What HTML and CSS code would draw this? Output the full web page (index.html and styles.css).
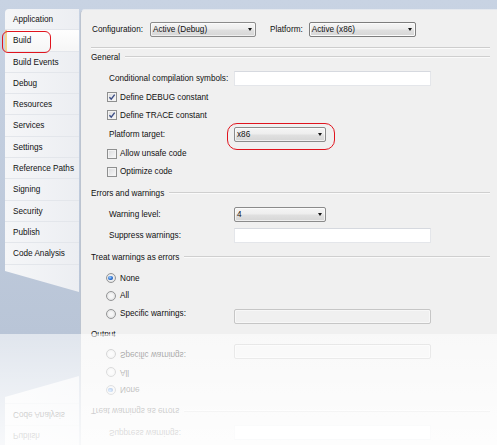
FILE: index.html
```html
<!DOCTYPE html>
<html>
<head>
<meta charset="utf-8">
<title>Build</title>
<link rel="stylesheet" href="styles.css">
</head>
<body>
<div class="window">
  <nav class="tabs">
    <div class="tab">Application</div>
    <div class="tab selected">Build</div>
    <div class="tab">Build Events</div>
    <div class="tab">Debug</div>
    <div class="tab">Resources</div>
    <div class="tab">Services</div>
    <div class="tab">Settings</div>
    <div class="tab">Reference Paths</div>
    <div class="tab">Signing</div>
    <div class="tab">Security</div>
    <div class="tab">Publish</div>
    <div class="tab">Code Analysis</div>
  </nav>
  <main class="panel">
    <div class="row config">
      <span class="lbl-config">Configuration:</span>
      <div class="combo combo-config"><span class="val">Active (Debug)</span><i class="arrow"></i></div>
      <span class="lbl-plat">Platform:</span>
      <div class="combo combo-plat"><span class="val">Active (x86)</span><i class="arrow"></i></div>
    </div>
    <div class="sep"></div>

    <div class="group g-general">General</div>
    <div class="row ind field-row r-cond">
      <span class="field-lbl">Conditional compilation symbols:</span>
      <div class="textbox"></div>
    </div>
    <div class="row chk-row r-debug">
      <span class="chk"><svg viewBox="0 0 8 8" width="8" height="8"><path d="M1.4 4.2 L3.2 6.1 L6.7 1.6" fill="none" stroke="#3d4f86" stroke-width="1.4"/></svg></span>
      <span>Define DEBUG constant</span>
    </div>
    <div class="row chk-row r-trace">
      <span class="chk"><svg viewBox="0 0 8 8" width="8" height="8"><path d="M1.4 4.2 L3.2 6.1 L6.7 1.6" fill="none" stroke="#3d4f86" stroke-width="1.4"/></svg></span>
      <span>Define TRACE constant</span>
    </div>
    <div class="row ind field-row r-target">
      <span class="field-lbl">Platform target:</span>
      <div class="combo combo-field"><span class="val">x86</span><i class="arrow"></i></div>
    </div>
    <div class="row chk-row r-unsafe">
      <span class="chk"></span>
      <span>Allow unsafe code</span>
    </div>
    <div class="row chk-row r-opt">
      <span class="chk"></span>
      <span>Optimize code</span>
    </div>

    <div class="group g-errors">Errors and warnings</div>
    <div class="row ind field-row r-level">
      <span class="field-lbl">Warning level:</span>
      <div class="combo combo-field"><span class="val">4</span><i class="arrow"></i></div>
    </div>
    <div class="row ind field-row r-suppress">
      <span class="field-lbl">Suppress warnings:</span>
      <div class="textbox"></div>
    </div>

    <div class="group g-treat">Treat warnings as errors</div>
    <div class="row radio-row r-none">
      <span class="radio checked"></span>
      <span>None</span>
    </div>
    <div class="row radio-row r-all">
      <span class="radio"></span>
      <span>All</span>
    </div>
    <div class="row radio-row r-specific">
      <span class="radio"></span>
      <span class="specific-lbl">Specific warnings:</span>
      <div class="textbox disabled"></div>
    </div>

    <div class="group g-output">Output</div>
  </main>
  <div class="mark mark-build"></div>
  <div class="mark mark-target"></div>
</div>
<div class="reflection" aria-hidden="true"></div>
<script src="script.js"></script>
</body>
</html>
```

FILE: script.js
```js
// Build the mirrored reflection under the window from a copy of it.
(function () {
  var win = document.querySelector('.window');
  var refl = document.querySelector('.reflection');
  if (win && refl) {
    var copy = win.cloneNode(true);
    copy.classList.add('mirrored');
    refl.appendChild(copy);
  }
})();
```

FILE: styles.css
```css
html, body {
  margin: 0;
  background: #ffffff;
}

body {
  font-family: "Liberation Sans", Arial, sans-serif;
  font-size: 8.2px;
  color: #111111;
  overflow: hidden;
}

.window {
  position: relative;
  box-sizing: border-box;
  height: 334px;
  padding-top: 9px;
  display: flex;
  align-items: flex-start;
  overflow: hidden;
  background: linear-gradient(#c8d3e3, #b9c5d7);
}

/* reflection below the window */
.reflection {
  position: relative;
  height: 111px;
  overflow: hidden;
}

.window.mirrored {
  transform: scaleY(-1);
}

.reflection::after {
  content: "";
  position: absolute;
  inset: 0;
  background: linear-gradient(rgba(255,255,255,0.56), rgba(255,255,255,0.88));
}

/* left tab column */
.tabs {
  flex: none;
  margin-left: 5px;
  width: 74px;
  height: 283px;
  box-sizing: border-box;
  background: linear-gradient(to right, #f5f6f8, #eceef2);
  border-top-left-radius: 4px;
  clip-path: polygon(0 0, 100% 0, 100% 100%, 0 calc(100% - 21px));
}

.tab {
  box-sizing: border-box;
  height: 21.3px;
  line-height: 21.3px;
  padding-left: 8px;
  border-bottom: 1px solid #e3e6eb;
  white-space: nowrap;
}

.tab.selected {
  background: linear-gradient(#fefefe, #f6f6f6);
  border-left: 2px solid #f2d690;
  padding-left: 6px;
}

/* content panel */
.panel {
  flex: 1;
  align-self: stretch;
  margin-left: 1px;
  padding: 0 7px 0 10px;
  display: flex;
  flex-direction: column;
  background: #f0f0f0;
  border-left: 1px solid #bcc4d0;
  border-top: 1px solid #e4e8ee;
  border-top-left-radius: 5px;
}

.row {
  flex: none;
  display: flex;
  align-items: center;
  white-space: nowrap;
}

.config { margin-top: 12px; height: 15px; padding-left: 1px; }
.lbl-config { margin-right: 7px; }
.lbl-plat { margin-left: 14px; margin-right: 6px; }

.sep {
  flex: none;
  margin-top: 10px;
  height: 0;
  border-top: 1px solid #cdcdcd;
  border-bottom: 1px solid #fbfbfb;
}

.group {
  flex: none;
  height: 12px;
  display: flex;
  align-items: center;
  white-space: nowrap;
}

.group::after {
  content: "";
  flex: 1;
  margin-left: 5px;
  height: 0;
  border-top: 1px solid #cfcfcf;
  border-bottom: 1px solid #fafafa;
}

.g-general { margin-top: 2px; }
.g-errors { margin-top: 6.5px; }
.g-treat { margin-top: 8.5px; }
.g-output { margin-top: 5px; }

.ind { padding-left: 18px; }
.field-row { height: 15px; }
.field-lbl { width: 125px; flex: none; }

.r-cond { margin-top: 8px; }
.r-debug { margin-top: 2.3px; }
.r-trace { margin-top: 0.2px; }
.r-target { margin-top: 2.5px; }
.r-unsafe { margin-top: 2.7px; }
.r-opt { margin-top: 0; }
.r-level { margin-top: 7.8px; }
.r-suppress { margin-top: 6px; }
.r-none { margin-top: 5.8px; }
.r-all { margin-top: 0; }
.r-specific { margin-top: 0.1px; }

/* combo boxes */
.combo {
  flex: none;
  box-sizing: border-box;
  height: 15px;
  display: flex;
  align-items: center;
  border: 1px solid #8b8b8b;
  border-radius: 2px;
  background: linear-gradient(#f5f5f5 0%, #ededed 48%, #e0e0e0 52%, #d6d6d6 100%);
  box-shadow: inset 0 0 0 1px rgba(255,255,255,0.6);
}

.combo .val { padding-left: 2px; }

.combo-config { width: 106px; }
.combo-plat {
  width: 107px;
  border-color: #7d7d7d;
  box-shadow: inset 0 0 0 1px #fbfbfb;
}
.combo-field { width: 92px; }

.arrow {
  margin-left: auto;
  margin-right: 3px;
  width: 0;
  height: 0;
  border-left: 2.5px solid transparent;
  border-right: 2.5px solid transparent;
  border-top: 3px solid #141414;
}

/* text boxes */
.textbox {
  flex: none;
  box-sizing: border-box;
  width: 197px;
  height: 15px;
  background: #ffffff;
  border: 1px solid #e4e6ea;
  border-top-color: #d6d9df;
}

.textbox.disabled {
  background: #f0f0f0;
  border: 1px solid #c6c6c6;
  border-radius: 2px;
  box-shadow: inset 0 0 0 1px #f7f7f7;
}

/* checkboxes */
.chk-row { height: 18px; padding-left: 16px; }

.chk {
  flex: none;
  box-sizing: border-box;
  width: 10px;
  height: 10px;
  margin-right: 3px;
  display: flex;
  align-items: center;
  justify-content: center;
  border: 1px solid #8e8f8f;
  background: linear-gradient(135deg, #d9dadc, #f9f9f9);
  box-shadow: inset 0 0 0 1px #f3f3f3;
}

.chk svg { display: block; }

/* radio buttons */
.radio-row { height: 17.8px; padding-left: 14.5px; }

.radio {
  flex: none;
  box-sizing: border-box;
  width: 10px;
  height: 10px;
  margin-right: 4.5px;
  border-radius: 50%;
  border: 1px solid #949596;
  background: radial-gradient(circle at 50% 50%, #f6f6f6 30%, #d6d7d8 100%);
  display: flex;
  align-items: center;
  justify-content: center;
}

.radio.checked::after {
  content: "";
  width: 4.5px;
  height: 4.5px;
  border-radius: 50%;
  background: radial-gradient(circle at 40% 35%, #9fd0ff 0%, #2a6fd0 55%, #153f86 100%);
}

.r-specific {
  height: 19px;
  align-items: flex-start;
}

.r-specific .radio { margin-top: 4px; }
.specific-lbl { width: 114px; flex: none; line-height: 18px; }
.r-specific .textbox { margin-top: 4px; }

/* red annotation marks drawn over the screenshot */
.mark {
  position: absolute;
  box-sizing: border-box;
  border: 1.5px solid #e0141e;
}

.mark-build {
  left: 1.5px;
  top: 30.5px;
  width: 49px;
  height: 22.5px;
  border-radius: 6px;
}

.mark-target {
  left: 227px;
  top: 123px;
  width: 108px;
  height: 27px;
  border-radius: 10px;
}
```
